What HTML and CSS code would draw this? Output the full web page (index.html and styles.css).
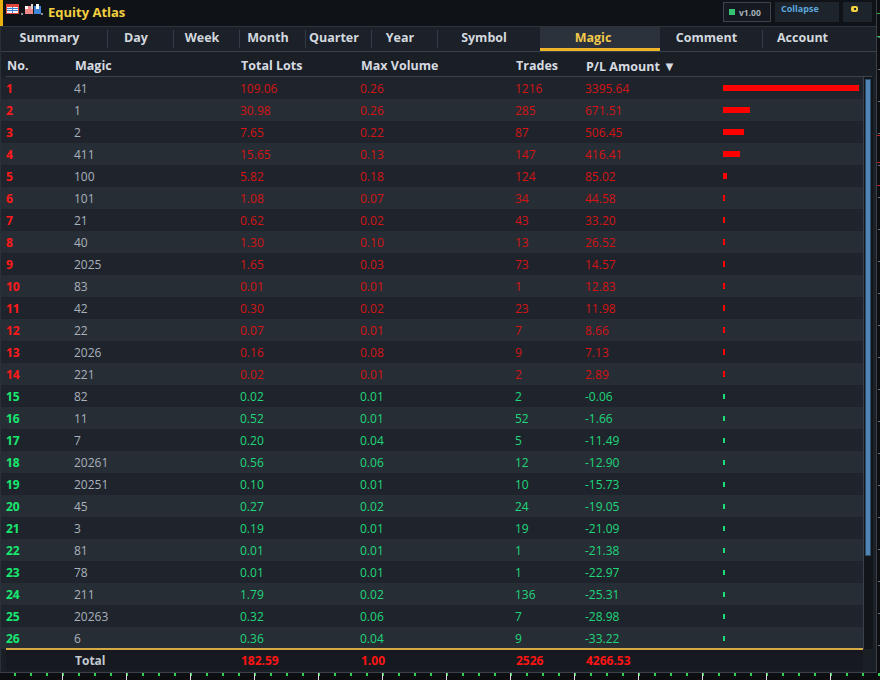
FILE: index.html
```html
<!DOCTYPE html>
<html>
<head>
<meta charset="utf-8">
<link rel="stylesheet" href="styles.css">
</head>
<body>
<div class="screen">
  <div class="app">
    <div class="titlebar">
      <div class="accent"></div>
      <svg class="logo" width="40" height="14" viewBox="0 0 40 14">
        <rect x="2.5" y="1.5" width="12" height="9" fill="#f3f3f3" stroke="#e0463c" stroke-width="1"/>
        <rect x="3" y="2" width="11" height="2" fill="#e0463c"/>
        <line x1="3" y1="5.5" x2="14" y2="5.5" stroke="#3b7fd6" stroke-width="1"/>
        <line x1="3" y1="7.5" x2="14" y2="7.5" stroke="#3b7fd6" stroke-width="1"/>
        <line x1="8.5" y1="4" x2="8.5" y2="10" stroke="#3b7fd6" stroke-width="1"/>
        <rect x="21" y="3" width="8" height="8" fill="#f08a8a"/>
        <rect x="21" y="3" width="3" height="3" fill="#ffffff"/>
        <rect x="27" y="1" width="2" height="5" fill="#d9d9d9"/>
        <rect x="30" y="3" width="7" height="8" fill="#3f86d8"/>
        <rect x="32" y="1" width="3" height="5" fill="#ffffff"/>
        <rect x="17" y="10" width="2" height="2" fill="#8a8f96"/>
        <rect x="37" y="10" width="2" height="2" fill="#8a8f96"/>
      </svg>
      <div class="title">Equity Atlas</div>
      <div class="spacer"></div>
      <div class="tbtn ver"><span class="dot"></span>v1.00</div>
      <div class="tbtn collapse">Collapse</div>
      <div class="tbtn lockbtn"><span class="lock"></span></div>
    </div>

    <div class="tabs">
      <div class="tab w108 sep">Summary</div>
      <div class="tab w66 sep">Day</div>
      <div class="tab w66 sep">Week</div>
      <div class="tab w66 sep">Month</div>
      <div class="tab w66 sep">Quarter</div>
      <div class="tab w66 sep">Year</div>
      <div class="tab w102">Symbol</div>
      <div class="tab w120 active">Magic</div>
      <div class="tab w103 sep">Comment</div>
      <div class="tab grow">Account</div>
    </div>

    <div class="colhead">
      <span>No.</span><span>Magic</span><span>Total Lots</span><span>Max Volume</span><span>Trades</span><span>P/L Amount <span class="tri">&#9660;</span></span><span></span>
    </div>

    <div class="bodywrap">
      <div class="rows">
        <div class="row loss"><span class="no">1</span><span class="mg">41</span><span>109.06</span><span>0.26</span><span>1216</span><span>3395.64</span><span class="bc"><i class="bar" style="width:136px"></i></span></div>
        <div class="row loss"><span class="no">2</span><span class="mg">1</span><span>30.98</span><span>0.26</span><span>285</span><span>671.51</span><span class="bc"><i class="bar" style="width:27px"></i></span></div>
        <div class="row loss"><span class="no">3</span><span class="mg">2</span><span>7.65</span><span>0.22</span><span>87</span><span>506.45</span><span class="bc"><i class="bar" style="width:21px"></i></span></div>
        <div class="row loss"><span class="no">4</span><span class="mg">411</span><span>15.65</span><span>0.13</span><span>147</span><span>416.41</span><span class="bc"><i class="bar" style="width:17px"></i></span></div>
        <div class="row loss"><span class="no">5</span><span class="mg">100</span><span>5.82</span><span>0.18</span><span>124</span><span>85.02</span><span class="bc"><i class="bar" style="width:4px"></i></span></div>
        <div class="row loss"><span class="no">6</span><span class="mg">101</span><span>1.08</span><span>0.07</span><span>34</span><span>44.58</span><span class="bc"><i class="bar" style="width:2px"></i></span></div>
        <div class="row loss"><span class="no">7</span><span class="mg">21</span><span>0.62</span><span>0.02</span><span>43</span><span>33.20</span><span class="bc"><i class="bar" style="width:2px"></i></span></div>
        <div class="row loss"><span class="no">8</span><span class="mg">40</span><span>1.30</span><span>0.10</span><span>13</span><span>26.52</span><span class="bc"><i class="bar" style="width:2px"></i></span></div>
        <div class="row loss"><span class="no">9</span><span class="mg">2025</span><span>1.65</span><span>0.03</span><span>73</span><span>14.57</span><span class="bc"><i class="bar" style="width:2px"></i></span></div>
        <div class="row loss"><span class="no">10</span><span class="mg">83</span><span>0.01</span><span>0.01</span><span>1</span><span>12.83</span><span class="bc"><i class="bar" style="width:2px"></i></span></div>
        <div class="row loss"><span class="no">11</span><span class="mg">42</span><span>0.30</span><span>0.02</span><span>23</span><span>11.98</span><span class="bc"><i class="bar" style="width:2px"></i></span></div>
        <div class="row loss"><span class="no">12</span><span class="mg">22</span><span>0.07</span><span>0.01</span><span>7</span><span>8.66</span><span class="bc"><i class="bar" style="width:2px"></i></span></div>
        <div class="row loss"><span class="no">13</span><span class="mg">2026</span><span>0.16</span><span>0.08</span><span>9</span><span>7.13</span><span class="bc"><i class="bar" style="width:2px"></i></span></div>
        <div class="row loss"><span class="no">14</span><span class="mg">221</span><span>0.02</span><span>0.01</span><span>2</span><span>2.89</span><span class="bc"><i class="bar" style="width:2px"></i></span></div>
        <div class="row gain"><span class="no">15</span><span class="mg">82</span><span>0.02</span><span>0.01</span><span>2</span><span>-0.06</span><span class="bc"><i class="bar" style="width:2px"></i></span></div>
        <div class="row gain"><span class="no">16</span><span class="mg">11</span><span>0.52</span><span>0.01</span><span>52</span><span>-1.66</span><span class="bc"><i class="bar" style="width:2px"></i></span></div>
        <div class="row gain"><span class="no">17</span><span class="mg">7</span><span>0.20</span><span>0.04</span><span>5</span><span>-11.49</span><span class="bc"><i class="bar" style="width:2px"></i></span></div>
        <div class="row gain"><span class="no">18</span><span class="mg">20261</span><span>0.56</span><span>0.06</span><span>12</span><span>-12.90</span><span class="bc"><i class="bar" style="width:2px"></i></span></div>
        <div class="row gain"><span class="no">19</span><span class="mg">20251</span><span>0.10</span><span>0.01</span><span>10</span><span>-15.73</span><span class="bc"><i class="bar" style="width:2px"></i></span></div>
        <div class="row gain"><span class="no">20</span><span class="mg">45</span><span>0.27</span><span>0.02</span><span>24</span><span>-19.05</span><span class="bc"><i class="bar" style="width:2px"></i></span></div>
        <div class="row gain"><span class="no">21</span><span class="mg">3</span><span>0.19</span><span>0.01</span><span>19</span><span>-21.09</span><span class="bc"><i class="bar" style="width:2px"></i></span></div>
        <div class="row gain"><span class="no">22</span><span class="mg">81</span><span>0.01</span><span>0.01</span><span>1</span><span>-21.38</span><span class="bc"><i class="bar" style="width:2px"></i></span></div>
        <div class="row gain"><span class="no">23</span><span class="mg">78</span><span>0.01</span><span>0.01</span><span>1</span><span>-22.97</span><span class="bc"><i class="bar" style="width:2px"></i></span></div>
        <div class="row gain"><span class="no">24</span><span class="mg">211</span><span>1.79</span><span>0.02</span><span>136</span><span>-25.31</span><span class="bc"><i class="bar" style="width:2px"></i></span></div>
        <div class="row gain"><span class="no">25</span><span class="mg">20263</span><span>0.32</span><span>0.06</span><span>7</span><span>-28.98</span><span class="bc"><i class="bar" style="width:2px"></i></span></div>
        <div class="row gain"><span class="no">26</span><span class="mg">6</span><span>0.36</span><span>0.04</span><span>9</span><span>-33.22</span><span class="bc"><i class="bar" style="width:2px"></i></span></div>
      </div>
      <div class="scrolltrack"><div class="thumb"></div></div>
      <div class="rstrip"></div>
    </div>

    <div class="totalrow">
      <span></span><span class="tlabel">Total</span><span>182.59</span><span>1.00</span><span>2526</span><span>4266.53</span><span></span>
    </div>
  </div>
  <div class="rightaxis"></div>
</div>
<div class="bottomaxis"></div>
</body>
</html>
```

FILE: styles.css
```css
* { box-sizing: border-box; }
html, body { margin: 0; padding: 0; }
body {
  width: 880px;
  height: 680px;
  overflow: hidden;
  background: #0c0e11;
  font-family: "Open Sans", "Noto Sans", "Liberation Sans", sans-serif;
}
.screen {
  display: flex;
  height: 673px;
}
.app {
  width: 877px;
  height: 673px;
  display: flex;
  flex-direction: column;
  background: #1a1e25;
  border-right: 1px solid #3a414a;
  border-bottom: 1px solid #3a414a;
  border-left: 1px solid #2a3038;
}
.rightaxis {
  flex: 1;
  background-color: #0c0e11;
  background-image:
    linear-gradient(#2fb84a, #2fb84a),
    linear-gradient(#2fb84a, #2fb84a),
    linear-gradient(#c02020, #c02020),
    linear-gradient(#c02020, #c02020),
    linear-gradient(#c02020, #c02020),
    repeating-linear-gradient(to bottom, transparent 0, transparent 31px, #6b7078 31px, #6b7078 32px);
  background-size: 3px 1px, 3px 1px, 3px 1px, 3px 1px, 3px 1px, 2px 100%;
  background-position: 0 13px, 0 36px, 0 135px, 0 162px, 0 185px, 1px 6px;
  background-repeat: no-repeat, no-repeat, no-repeat, no-repeat, no-repeat, no-repeat;
}
.bottomaxis {
  height: 7px;
  background-color: #0c0e11;
  background-image:
    repeating-linear-gradient(to right, transparent 0, transparent 62px, #d8dade 62px, #d8dade 63px, transparent 63px, transparent 64px),
    repeating-linear-gradient(to right, transparent 0, transparent 14px, #2fd04a 14px, #2fd04a 16px);
  background-size: 100% 7px, 100% 3px;
  background-repeat: no-repeat;
}

/* title bar */
.titlebar {
  height: 26px;
  display: flex;
  align-items: flex-start;
  background: #0f1217;
  margin-left: -1px;
}
.accent {
  width: 3px;
  height: 26px;
  background: #e8b10f;
}
.logo {
  margin-top: 3px;
  margin-left: 1px;
}
.title {
  margin-left: 4px;
  margin-top: 3px;
  color: #f2cf3f;
  font-weight: 700;
  font-size: 13px;
  line-height: 18px;
}
.spacer { flex: 1; }
.tbtn {
  height: 20px;
  margin-top: 2px;
  font-size: 8.5px;
  font-weight: 700;
  background: #1e242c;
}
.ver {
  width: 48px;
  background: #161a20;
  border: 1px solid #3c4450;
  color: #a8b0ba;
  display: flex;
  align-items: center;
  padding-left: 5px;
  gap: 4px;
}
.dot {
  width: 6px;
  height: 6px;
  background: #33c272;
}
.collapse {
  width: 64px;
  margin-left: 4px;
  color: #5aa8dc;
  padding-left: 6px;
  line-height: 14px;
  font-size: 9px;
}
.lockbtn {
  width: 29px;
  margin-left: 4px;
  margin-right: 4px;
  position: relative;
}
.lock {
  position: absolute;
  left: 8px;
  top: 4px;
  width: 7px;
  height: 6px;
  background: #f2cf3f;
  border-radius: 2px;
}
.lock::after {
  content: "";
  position: absolute;
  left: 3px;
  top: 2px;
  width: 2px;
  height: 2px;
  background: #1e242c;
}

/* tabs */
.tabs {
  height: 26px;
  display: flex;
  background: #1c2129;
  border-top: 1px solid #2d343d;
  border-bottom: 1px solid #39414b;
}
.tab {
  position: relative;
  height: 24px;
  color: #d3d8de;
  font-size: 12.5px;
  font-weight: 700;
  line-height: 21px;
  text-align: center;
  padding-right: 10px;
}
.tab.sep::after {
  content: "";
  position: absolute;
  right: 0;
  top: 3px;
  width: 1px;
  height: 18px;
  background: #343b45;
}
.w108 { width: 107px; }
.w66 { width: 66px; }
.w102 { width: 102px; }
.w120 { width: 120px; }
.w103 { width: 103px; }
.grow { flex: 1; padding-right: 34px; }
.tab.active {
  background: #2b323b;
  color: #f2c94c;
  border-bottom: 3px solid #f0b429;
  padding-right: 14px;
}

/* columns */
.colhead, .row, .totalrow {
  display: grid;
  grid-template-columns: 68px 166px 120px 155px 70px 138px 1fr;
  padding-left: 5px;
  align-items: center;
}
.colhead {
  height: 25px;
  margin-left: 5px;
  padding-left: 1px;
  padding-top: 3px;
  border-bottom: 1px solid #3b434d;
  color: #d6dbe1;
  font-size: 12.5px;
  font-weight: 700;
  background: #1a1e25;
  margin-right: 4px;
}
.tri { font-size: 13px; }

.bodywrap {
  display: flex;
  height: 572px;
}
.rows {
  width: 862px;
  display: flex;
  flex-direction: column;
}
.row {
  height: 22px;
  font-size: 12px;
  background: #1f242c;
}
.row:nth-child(even) { background: #272d35; }
.row .no { font-weight: 700; }
.row .mg { color: #a9b1bc; }
.loss { color: #d41414; }
.loss .no { color: #ff1a1a; }
.gain { color: #1fd67a; }
.gain .no { color: #18e870; }
.bc {
  display: flex;
  align-items: center;
}
.bar {
  display: block;
  height: 6px;
}
.loss .bar { background: #ff0000; }
.gain .bar { height: 5px; background: #19e07a; }

.scrolltrack {
  width: 10px;
  background: #12161b;
  border-left: 1px solid #3a414b;
  padding: 2px 2px 0 1px;
}
.thumb {
  height: 477px;
  background: #4f86b6;
  border: 1px solid #2a4a66;
}
.rstrip {
  flex: 1;
  background: #1c2128;
}

.totalrow {
  height: 22px;
  background: #161a20;
  border-top: 2px solid #d6a945;
  margin-top: -1px;
  margin-left: 5px;
  margin-right: 13px;
  padding-left: 1px;
  color: #ff1414;
  font-size: 12px;
  font-weight: 700;
}
.totalrow .tlabel { color: #c2c9d2; }
```
